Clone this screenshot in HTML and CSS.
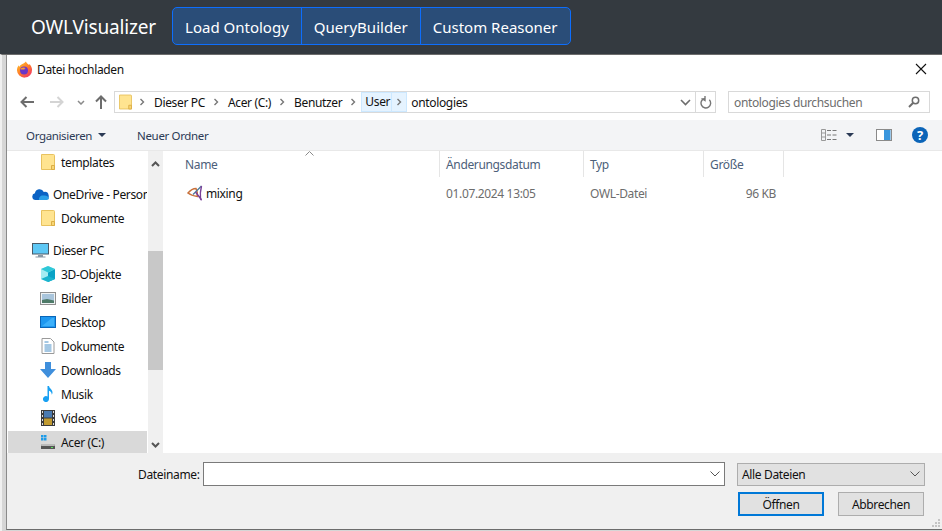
FILE: index.html

```html
<!DOCTYPE html>
<html lang="de">
<head>
  <meta charset="UTF-8">
  <title>OWLVisualizer</title>
  <meta name="viewport" content="width=device-width, initial-scale=1.0">
  <link rel="stylesheet" href="styles.css">
</head>
<body>
  <svg class="defs" width="0" height="0">
    <defs>
      <symbol id="folder" viewBox="0 0 14 16">
        <path d="M.5 .5h12a1 1 0 0 1 1 1v14H.5z" fill="#ffe490" stroke="#e8c25f"/>
        <path d="M10.5 15.5v-4h3v4z" fill="#f7d675" stroke="#dcae45"/>
      </symbol>
      <linearGradient id="fox" x1="0" y1="0" x2="0.8" y2="1">
        <stop offset="0" stop-color="#ffcb2e"/>
        <stop offset="0.55" stop-color="#ff7a28"/>
        <stop offset="1" stop-color="#f0356a"/>
      </linearGradient>
    </defs>
  </svg>

  <nav class="navbar">
    <span class="brand">OWLVisualizer</span>
    <div class="btn-group">
      <button class="nav-btn">Load Ontology</button>
      <button class="nav-btn">QueryBuilder</button>
      <button class="nav-btn">Custom Reasoner</button>
    </div>
  </nav>

  <div class="desk">
    <div class="dialog">
      <div class="title-bar">
        <svg class="fox" width="17" height="17" viewBox="0 0 18 18">
          <path d="M10.5 .5c.4 1.800 2.200 2.400 3.300 3.700 .3-.4 .4-.7 .5-1.100 1.800 2.200 2.700 4.300 2.700 6.200a8 8 0 0 1-16 .6c0-2.500 1-4.500 2-5.500 0 .8 .2 1.200 .6 1.600 1-2.500 4-2.600 6.900-5.500z" fill="url(#fox)"/>
          <circle cx="8.500" cy="10" r="4.200" fill="#6a35c9"/>
          <path d="M5 8c1.500-1.500 4-1.500 5.500-.5-1 .3-1.500 .8-1.500 1.500H5z" fill="#ff9a2e"/>
        </svg>
        <span class="title">Datei hochladen</span>
        <svg class="close" width="12" height="12" viewBox="0 0 12 12"><path d="M1 1l10 10M11 1L1 11" stroke="#111" stroke-width="1.100"/></svg>
      </div>

      <div class="nav-row">
        <svg class="arrow" width="14" height="12" viewBox="0 0 14 12"><path d="M6.500 1L1.500 6l5 5M2 6h12" fill="none" stroke="#6d6d6d" stroke-width="2"/></svg>
        <svg class="arrow fwd" width="14" height="12" viewBox="0 0 14 12"><path d="M7.500 1l5 5-5 5M12 6H0" fill="none" stroke="#d4d4d4" stroke-width="2"/></svg>
        <svg class="arrow down" width="8" height="5" viewBox="0 0 8 5"><path d="M1 1l3 3 3-3" fill="none" stroke="#8a8a8a" stroke-width="1.500"/></svg>
        <svg class="arrow up" width="12" height="14" viewBox="0 0 12 14"><path d="M1 6.500L6 1.500l5 5M6 2v12" fill="none" stroke="#6d6d6d" stroke-width="2"/></svg>

        <div class="address">
          <svg class="addr-folder" width="13" height="16"><use href="#folder"/></svg>
          <svg class="sep" width="12" height="8" viewBox="0 0 12 8"><path d="M4.500 1l3 3-3 3" fill="none" stroke="#777" stroke-width="1.400"/></svg>
          <span class="crumb">Dieser PC</span>
          <svg class="sep" width="12" height="8" viewBox="0 0 12 8"><path d="M4.500 1l3 3-3 3" fill="none" stroke="#777" stroke-width="1.400"/></svg>
          <span class="crumb">Acer (C:)</span>
          <svg class="sep" width="12" height="8" viewBox="0 0 12 8"><path d="M4.500 1l3 3-3 3" fill="none" stroke="#777" stroke-width="1.400"/></svg>
          <span class="crumb">Benutzer</span>
          <svg class="sep sep-last" width="12" height="8" viewBox="0 0 12 8"><path d="M4.500 1l3 3-3 3" fill="none" stroke="#777" stroke-width="1.400"/></svg>
          <span class="crumb-hi">User</span>
          <span class="sep-hi"><svg width="12" height="8" viewBox="0 0 12 8"><path d="M4.500 1l3 3-3 3" fill="none" stroke="#777" stroke-width="1.400"/></svg></span>
          <span class="crumb-end">ontologies</span>
          <svg class="addr-down" width="11" height="7" viewBox="0 0 11 7"><path d="M1 1l4.500 4.500L10 1" fill="none" stroke="#6d6d6d" stroke-width="1.600"/></svg>
          <div class="refresh">
            <svg width="12" height="13" viewBox="0 0 12 13"><path d="M4.500 2.500a4.800 4.800 0 1 0 4.800 1.300M5 0v4.500L1.500 2.500" fill="none" stroke="#777" stroke-width="1.400"/></svg>
          </div>
        </div>

        <div class="search">
          <span>ontologies durchsuchen</span>
          <svg width="12" height="12" viewBox="0 0 12 12"><circle cx="7.500" cy="4.500" r="3.200" fill="none" stroke="#6d6d6d" stroke-width="1.500"/><path d="M5 7L1 11" stroke="#6d6d6d" stroke-width="2"/></svg>
        </div>
      </div>

      <div class="toolbar">
        <span class="tool">Organisieren</span>
        <span class="caret"></span>
        <span class="tool new-folder">Neuer Ordner</span>
        <svg class="view-icon" width="16" height="12" viewBox="0 0 16 12">
          <path d="M.5 .5h4v11h-4zM.5 4h4M.5 8h4" fill="none" stroke="#999"/>
          <path d="M6 1.500h4M11.500 1.500h4M6 6h4M11.500 6h4M6 10.500h4M11.500 10.500h4" stroke="#777"/>
        </svg>
        <span class="caret view-caret"></span>
        <svg class="pane-icon" width="16" height="12" viewBox="0 0 16 12">
          <rect x=".5" y=".5" width="15" height="11" fill="#fff" stroke="#8a8a8a"/>
          <rect x="8" y="1" width="6" height="10" fill="#3a96dd"/>
          <rect x="14" y="1" width="1" height="10" fill="#9cc8ea"/>
        </svg>
        <svg class="help-icon" width="16" height="16" viewBox="0 0 16 16">
          <circle cx="8" cy="8" r="8" fill="#0b64b8"/>
          <text x="8" y="12.500" class="help-q">?</text>
        </svg>
      </div>

      <div class="main">
        <aside class="tree">
          <div class="tree-list">
            <div class="tree-row sub"><svg class="ico" width="14" height="16"><use href="#folder"/></svg>templates</div>
            <div class="tree-row top gap">
              <svg class="ico" width="17" height="11" viewBox="0 0 17 11"><path d="M3.500 11a3.400 3.400 0 0 1-.6-6.700A4.700 4.700 0 0 1 11.800 3 3.800 3.800 0 0 1 13.500 11z" fill="#0a62c4"/><path d="M7 11c-.5-3 2-5 4.500-4.500 2.500-.5 5 1 5.500 2.500 0 1-1 2-2.500 2z" fill="#2a9fe8"/></svg>
              <span class="clip">OneDrive - Personal</span>
            </div>
            <div class="tree-row sub"><svg class="ico" width="14" height="16"><use href="#folder"/></svg>Dokumente</div>
            <div class="tree-row top gap">
              <svg class="ico" width="17" height="15" viewBox="0 0 17 15"><rect x=".5" y=".5" width="16" height="10.500" fill="#5ec8f5" stroke="#4a5a68"/><path d="M6 12h5v1.500H6zM3.500 13.500h10v1h-10z" fill="#8a98a4"/></svg>
              Dieser PC
            </div>
            <div class="tree-row sub">
              <svg class="ico" width="16" height="16" viewBox="0 0 16 16"><path d="M8 0l7 3v10l-7 3-7-3V3z" fill="#a6ecf2"/><path d="M8 6.500l7-3.500v10l-7 3z" fill="#0aa3c6"/><path d="M8 0l7 3-7 3.500L1 3z" fill="#2fc8d8"/><path d="M1 13l7-3 7 3-7 3z" fill="#1bb4ce"/></svg>
              3D-Objekte
            </div>
            <div class="tree-row sub">
              <svg class="ico" width="16" height="13" viewBox="0 0 16 13"><rect x=".5" y=".5" width="15" height="12" fill="#eef2f4" stroke="#8f8f8f"/><rect x="2" y="2" width="12" height="9" fill="#a9c5dc"/><path d="M2 8l5-1 7 1.500V11H2z" fill="#4d7a68"/></svg>
              Bilder
            </div>
            <div class="tree-row sub">
              <svg class="ico" width="16" height="12" viewBox="0 0 16 12"><rect x=".5" y=".5" width="15" height="11" fill="#1e98f0" stroke="#0a66b8"/><path d="M2 10l10-8h2v8z" fill="#3cb0fa"/></svg>
              Desktop
            </div>
            <div class="tree-row sub">
              <svg class="ico" width="13" height="16" viewBox="0 0 13 16"><path d="M.5 .5h8.500l3.500 3.500v11.500H.500z" fill="#fff" stroke="#9a9a9a"/><path d="M3 4h4M3 7h7M3 9h7M3 11h7M3 13h7" stroke="#4a90c8"/></svg>
              Dokumente
            </div>
            <div class="tree-row sub">
              <svg class="ico" width="16" height="16" viewBox="0 0 16 16"><path d="M5 0h6v7h5l-8 9-8-9h5z" fill="#3f8fdc"/></svg>
              Downloads
            </div>
            <div class="tree-row sub">
              <svg class="ico" width="12" height="16" viewBox="0 0 12 16"><path d="M5.500 0h1.500c.3 2.500 3.500 3.500 3.500 6.500 0 1-.3 1.700-.8 2.300.2-2-1.200-3.500-2.700-4V13a3 3 0 1 1-1.500-2.500z" fill="#18a0f2"/></svg>
              Musik
            </div>
            <div class="tree-row sub">
              <svg class="ico" width="14" height="16" viewBox="0 0 14 16"><rect width="14" height="16" fill="#3a3a3a"/><rect x="3" y="1" width="8" height="6.500" fill="#4a7ab0"/><rect x="3" y="8.500" width="8" height="6.500" fill="#c09a30"/><path d="M1 1h1v2H1zM1 5h1v2H1zM1 9h1v2H1zM1 13h1v2H1zM12 1h1v2h-1zM12 5h1v2h-1zM12 9h1v2h-1zM12 13h1v2h-1z" fill="#ddd"/></svg>
              Videos
            </div>
            <div class="tree-row sub selected">
              <svg class="ico" width="14" height="14" viewBox="0 0 14 14"><path d="M0 0h2.500v2.500H0zM3 0h2.500v2.500H3zM0 3h2.500v2.500H0zM3 3h2.500v2.500H3z" fill="#1e9be8"/><path d="M1 9h12l1 2v3H0v-3z" fill="#555"/><path d="M1 9h12l1 2H0z" fill="#bbb"/><rect x="10" y="12" width="2" height="1" fill="#5fe05f"/></svg>
              Acer (C:)
            </div>
          </div>
          <div class="scrollbar">
            <svg class="scroll-btn" width="9" height="6" viewBox="0 0 9 6"><path d="M1 5l3.500-3.500L8 5" fill="none" stroke="#555" stroke-width="2"/></svg>
            <div class="scroll-track"><div class="scroll-thumb"></div></div>
            <svg class="scroll-btn" width="9" height="6" viewBox="0 0 9 6"><path d="M1 1l3.500 3.500L8 1" fill="none" stroke="#555" stroke-width="2"/></svg>
          </div>
        </aside>

        <section class="files">
          <div class="file-head">
            <span class="col">Name</span>
            <span class="col">Änderungsdatum</span>
            <span class="col">Typ</span>
            <span class="col">Größe</span>
            <svg class="sort" width="9" height="5" viewBox="0 0 9 5"><path d="M.5 4.500l4-4 4 4" fill="none" stroke="#8a8a8a"/></svg>
          </div>
          <div class="file-row">
            <span class="file-name">
              <svg width="16" height="16" viewBox="0 0 16 16" fill="none">
                <path d="M1 8c2.500-3 6-4.500 8-4.500 1 2 1.500 5 1.500 8C7 11 3.500 10 1 8z" stroke="#c8703a" stroke-width="1.500"/>
                <path d="M14.500 1L6 9.500" stroke="#4a7a9a" stroke-width="1.300"/>
                <path d="M14.500 1c-1 4-1.500 8-1 12.500L8.500 7" stroke="#7a3f98" stroke-width="1.400"/>
                <path d="M13.500 13.500l1 1.500" stroke="#7a3f98" stroke-width="1.500"/>
              </svg>
              mixing
            </span>
            <span class="meta">01.07.2024 13:05</span>
            <span class="meta">OWL-Datei</span>
            <span class="meta size">96 KB</span>
          </div>
        </section>
      </div>

      <div class="bottom">
        <div class="name-row">
          <label class="name-label">Dateiname:</label>
          <div class="name-input">
            <svg width="10" height="6" viewBox="0 0 10 6"><path d="M.5 .5L5 5l4.500-4.500" fill="none" stroke="#555"/></svg>
          </div>
          <div class="filter">
            <span>Alle Dateien</span>
            <svg width="10" height="6" viewBox="0 0 10 6"><path d="M.5 .5L5 5l4.500-4.500" fill="none" stroke="#555"/></svg>
          </div>
        </div>
        <div class="btn-row">
          <button class="win-btn primary">Öffnen</button>
          <button class="win-btn">Abbrechen</button>
        </div>
        <svg class="grip" width="8" height="8" viewBox="0 0 8 8"><path d="M6 0h2v2H6zM3 3h2v2H3zM6 3h2v2H6zM0 6h2v2H0zM3 6h2v2H3zM6 6h2v2H6z" fill="#c4c4c4"/></svg>
      </div>
    </div>
  </div>
</body>
</html>
```

FILE: styles.css

```css
* { box-sizing: border-box; }
html, body { margin: 0; height: 100%; overflow: hidden; }
body { background: #343a40; font-family: "Noto Sans", sans-serif; font-size: 12px; letter-spacing: -0.35px; color: #111; }
.defs { position: absolute; }

.navbar { height: 54px; display: flex; align-items: center; padding-left: 31px; background: #343a40; letter-spacing: 0; }
.brand { color: #fff; font-size: 19px; letter-spacing: -0.15px; margin-right: 16px; }
.btn-group { display: flex; height: 38px; margin-bottom: 2px; }
.nav-btn {
  font-family: "Noto Sans", sans-serif;
  font-size: 15px;
  color: #fff;
  background: #2a4d78;
  border: 1px solid #0d6efd;
  padding: 1px 12px 0;
  margin-left: -1px;
}
.nav-btn:first-child { border-radius: 5px 0 0 5px; margin-left: 0; }
.nav-btn:last-child { border-radius: 0 5px 5px 0; }

.desk { height: 477px; background: #d6d6d6; border-top: 1px solid #6c6c6c; border-left: 2px solid #f0f0f0; padding-left: 4px; }
.dialog { height: 475px; background: #fff; border-left: 1px solid #8a8a8a; border-bottom: 1px solid #6c6c6c; display: flex; flex-direction: column; }

.title-bar { height: 30px; display: flex; align-items: center; padding: 0 15px 2px 9px; flex: none; }
.title { margin-left: 4px; }
.close { margin-left: auto; }

.nav-row { height: 35px; display: flex; align-items: center; flex: none; padding: 6px 0 7px; }
.arrow { flex: none; margin-left: 13px; }
.arrow.fwd { margin-left: 16px; }
.arrow.down { margin-left: 13px; }
.arrow.up { margin-left: 10px; }
.address {
  width: 602px;
  height: 22px;
  margin-left: 7px;
  border: 1px solid #d9d9d9;
  display: flex;
  align-items: center;
}
.addr-folder { flex: none; margin-left: 4px; margin-right: 4px; }
.sep { flex: none; }
.crumb { padding: 0 5px 0 6px; }
.sep-last { margin-right: 2px; }
.crumb-hi { background: #e5f3ff; border: 1px solid #cce8ff; height: 20px; line-height: 18px; width: 31px; padding-left: 3px; }
.sep-hi { background: #e5f3ff; border: 1px solid #cce8ff; border-left: 0; height: 20px; width: 15px; display: flex; align-items: center; justify-content: center; }
.crumb-end { margin-left: 4px; }
.addr-down { margin-left: auto; margin-right: 4px; }
.refresh { width: 20px; height: 20px; border-left: 1px solid #d9d9d9; display: flex; align-items: center; justify-content: center; }
.search {
  width: 202px;
  height: 22px;
  margin-left: 12px;
  border: 1px solid #d9d9d9;
  display: flex;
  align-items: center;
  justify-content: space-between;
  padding: 0 9px 0 5px;
  color: #6d6d6d;
}

.toolbar { height: 31px; flex: none; background: #f3f4f6; border-bottom: 1px solid #e8e8e8; display: flex; align-items: center; padding-left: 19px; color: #2b3a55; }
.tool { font-size: 11.5px; }
.caret { width: 0; height: 0; border: 4px solid transparent; border-top-color: #2b3a55; border-bottom: 0; margin-left: 6px; }
.new-folder { margin-left: 31px; }
.view-icon { margin-left: auto; }
.view-caret { margin-left: 9px; }
.pane-icon { margin-left: 22px; }
.help-icon { margin-left: 20px; margin-right: 14px; }
.help-q { font-size: 13px; font-weight: bold; fill: #fff; text-anchor: middle; }

.main { flex: 1; min-height: 0; display: flex; background: #fff; }
.tree { width: 156px; margin-left: 1px; display: flex; flex: none; overflow: hidden; }
.tree-list { width: 139px; flex: none; overflow: hidden; }
.tree-row { height: 24px; display: flex; align-items: center; white-space: nowrap; overflow: hidden; padding-bottom: 2px; }
.tree-row.gap { margin-top: 8px; }
.tree-row.sub { padding-left: 32px; }
.tree-row.top { padding-left: 24px; }
.tree-row .ico { flex: none; }
.tree-row.top .ico { width: 17px; margin-right: 4px; }
.tree-row.sub .ico { width: 16px; margin-right: 5px; }
.tree-row.selected { background: #d9d9d9; }
.clip { overflow: hidden; }
.scrollbar { width: 15px; flex: none; background: #f0f0f0; display: flex; flex-direction: column; align-items: center; padding: 10px 0 5px; margin-left: 1px; }
.scroll-track { flex: 1; width: 100%; padding-top: 84px; }
.scroll-thumb { height: 119px; background: #c8c8c8; }

.files { flex: 1; margin-left: 3px; }
.file-head, .file-row { display: grid; grid-template-columns: 273px 144px 120px 80px; }
.file-head { position: relative; height: 26px; align-items: stretch; }
.col { border-right: 1px solid #e5e5e5; padding: 5px 0 0 6px; color: #4c607a; }
.col:first-child { padding-left: 18px; }
.sort { position: absolute; left: 138px; top: 0; }
.file-row { height: 30px; align-items: center; margin-top: 1px; }
.file-row .file-name { display: flex; align-items: center; gap: 3px; padding-left: 20px; }
.meta { color: #6d6d6d; padding-left: 6px; }
.meta.size { text-align: right; padding-right: 8px; }

.bottom { position: relative; height: 76px; flex: none; background: #f0f0f0; padding: 9px 17px 0 0; }
.name-row { display: flex; align-items: center; height: 24px; }
.name-label { margin-left: 131px; width: 65px; }
.name-input { width: 522px; height: 24px; background: #fff; border: 1px solid #7a7a7a; display: flex; align-items: center; justify-content: flex-end; padding-right: 4px; }
.filter { width: 188px; height: 23px; margin-left: 12px; background: #e1e1e1; border: 1px solid #adadad; display: flex; align-items: center; justify-content: space-between; padding: 0 4px; }
.btn-row { display: flex; justify-content: flex-end; gap: 14px; margin-top: 6px; padding-right: 1px; }
.win-btn { width: 86px; height: 24px; background: #e1e1e1; border: 1px solid #adadad; font-family: "Noto Sans", sans-serif; font-size: 12px; letter-spacing: -0.35px; color: #111; padding: 0; }
.win-btn.primary { border: 2px solid #0078d7; }
.grip { position: absolute; right: 2px; bottom: 2px; }
```
